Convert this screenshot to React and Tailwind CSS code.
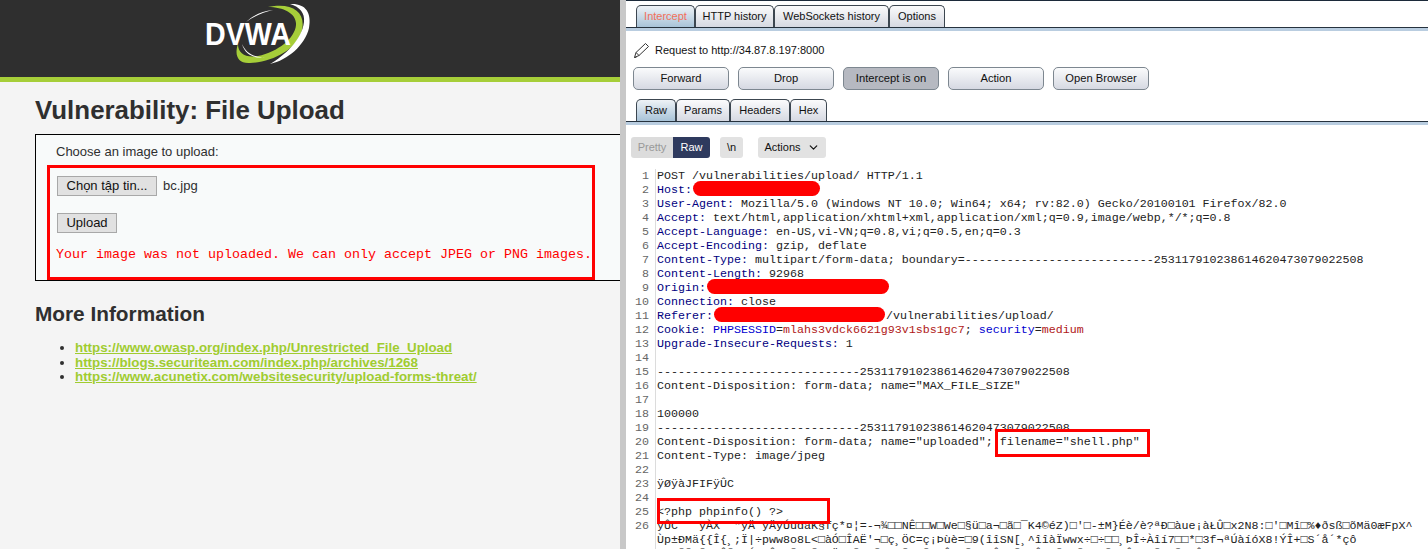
import { ChevronDown } from "lucide-react";

const C = "text-[#000080]";

function Redact({ width }) {
  return <span className="mx-px -my-[2px] inline-block h-[15px] rounded-full bg-[#ff0000] align-[-1px]" style={{ width }} />;
}

function H({ children }) {
  return <span className={C}>{children}</span>;
}

const garbage1 = "ÿÛC   ÿÀX  \"ÿÄ ÿÄÿÚüdàK§fç*¤¦=-¬¾□□NÊ□□W□We□§ü□a¬□ã□¯K4©éZ)□'□-±M}Éè/è?ªÐ□àue¡àŁÛ□x2N8:□'□Mî□%♦ðsß□õMä0æFpX^";
const garbage2 = "Ùp±ÐMä{{Î{¸;Ï|÷pww8o8L<□àÓ□ÎAË'¬□ç¸ÖC=ç¡Þùè=□9(îîSN[¸^îîàÏwwx÷□÷□□¸ÞÎ÷Àîí7□□*□3f¬ªÚàíóX8!ÝÎ+□S´å´*çô";
const garbage3 = "   ÑÃ Ñ  ÂÃ  Ý  Ô  Ñ  Ã  Ö  Ñ  Ñ   Ã  Ñ  Û  Ñ   Ô  Ñ  Ô  Ñ  Ñ   Ã  Ô   Ñ  Ñ  Ô";

const lines = [
  <>POST /vulnerabilities/upload/ HTTP/1.1</>,
  <><H>Host:</H><Redact width={127} /></>,
  <><H>User-Agent:</H> Mozilla/5.0 (Windows NT 10.0; Win64; x64; rv:82.0) Gecko/20100101 Firefox/82.0</>,
  <><H>Accept:</H> text/html,application/xhtml+xml,application/xml;q=0.9,image/webp,*/*;q=0.8</>,
  <><H>Accept-Language:</H> en-US,vi-VN;q=0.8,vi;q=0.5,en;q=0.3</>,
  <><H>Accept-Encoding:</H> gzip, deflate</>,
  <><H>Content-Type:</H> multipart/form-data; boundary=---------------------------253117910238614620473079022508</>,
  <><H>Content-Length:</H> 92968</>,
  <><H>Origin:</H><Redact width={182} /></>,
  <><H>Connection:</H> close</>,
  <><H>Referer:</H><Redact width={171} />/vulnerabilities/upload/</>,
  <><H>Cookie:</H> <span className="text-[#0000d0]">PHPSESSID</span>=<span className="text-[#b01818]">mlahs3vdck6621g93v1sbs1gc7</span>; <span className="text-[#0000d0]">security</span>=<span className="text-[#b01818]">medium</span></>,
  <><H>Upgrade-Insecure-Requests:</H> 1</>,
  <>&nbsp;</>,
  <>-----------------------------253117910238614620473079022508</>,
  <>Content-Disposition: form-data; name="MAX_FILE_SIZE"</>,
  <>&nbsp;</>,
  <>100000</>,
  <>-----------------------------253117910238614620473079022508</>,
  <>Content-Disposition: form-data; name="uploaded"; filename="shell.php"</>,
  <>Content-Type: image/jpeg</>,
  <>&nbsp;</>,
  <>ÿØÿàJFIFÿÛC</>,
  <>&nbsp;</>,
  <>&lt;?php phpinfo() ?&gt;</>,
  <>{garbage1}</>,
];

function Tab({ label, width, active, hot }) {
  return (
    <div
      className={`flex h-full items-center justify-center rounded-t-[5px] border border-b-0 border-[#3c4650] ${width} ${
        active ? "bg-linear-to-b from-[#eef2f6] to-[#a8c3d8]" : "bg-linear-to-b from-[#fbfbfc] to-[#d6d9e2]"
      } ${hot ? "text-[#f2705a]" : "text-[#111]"}`}
    >
      {label}
    </div>
  );
}

function ActionButton({ label, on }) {
  return (
    <button
      type="button"
      className={`h-[23px] w-[96px] rounded-[5px] border border-[#7d8790] text-[#111] ${
        on ? "bg-[#b6b9c1]" : "bg-linear-to-b from-[#fafbfc] to-[#d6d9e2]"
      }`}
    >
      {label}
    </button>
  );
}

function Logo() {
  return (
    <svg width="140" height="76" viewBox="0 0 140 76">
      <path d="M88 7C112 2 126 12 122 30C117 50 92 62 70 63C58 64 54 55 58 44C58 54 66 58 78 56C98 52 115 38 116 25C117 14 104 7 88 7Z" fill="#a6ce39" />
      <path d="M110 4C125 3 132 12 129 28C125 45 108 60 90 64C104 56 122 40 124 22C125 13 120 7 110 4Z" fill="#fff" />
      <path d="M66 22C72 16 82 11 93 10C84 12 74 16 66 22Z" fill="#fff" />
      <path d="M62 44C66 53 74 58 85 57C75 59 65 55 62 44Z" fill="#fff" />
      <text x="25" y="45" fill="#fff" fontFamily="Liberation Sans, sans-serif" fontWeight="700" fontSize="32" textLength="86" lengthAdjust="spacingAndGlyphs">
        DVWA
      </text>
    </svg>
  );
}

export default function App() {
  return (
    <div className="flex h-[549px] w-[1428px] overflow-hidden bg-white font-['Liberation_Sans',sans-serif]">
      <section className="h-full w-[620px] shrink-0 overflow-hidden bg-[#f4f4f4] text-[#2f2f2f]">
        <header className="h-[77px] bg-[#2f2f2f] pl-[180px]">
          <Logo />
        </header>
        <div className="h-[5px] bg-[#a6ce39]" />
        <div className="pl-[35px]">
          <h1 className="mt-[13px] text-[25.9px] leading-[30px] font-bold whitespace-nowrap">Vulnerability: File Upload</h1>
          <div className="relative mt-[9px] h-[147px] w-[620px] border border-black bg-[#f8fafa] pt-[9px] pl-[20px] text-[13px] leading-4">
            <p>Choose an image to upload:</p>
            <div className="mt-[16px] flex items-center gap-[6px] pl-px">
              <button type="button" className="h-[20px] w-[100px] border border-[#a8a8a8] bg-[#e1e1e1] text-[#111]">
                Chọn tập tin...
              </button>
              <span>bc.jpg</span>
            </div>
            <button type="button" className="mt-[17px] ml-px block h-[20px] w-[60px] border border-[#a8a8a8] bg-[#e1e1e1] text-[#111]">
              Upload
            </button>
            <pre className="mt-[14px] font-['Liberation_Mono',monospace] text-[13.33px] leading-4 text-[#ff0000]">
              Your image was not uploaded. We can only accept JPEG or PNG images.
            </pre>
            <div className="absolute top-[30px] left-[11px] h-[115px] w-[548px] border-[3px] border-[#ff0000]" />
          </div>
          <h2 className="mt-[21px] text-[20.8px] leading-6 font-bold">More Information</h2>
          <ul className="mt-[15px] list-disc pl-[40px] text-[13.33px] leading-[14.6px] font-bold">
            <li><a className="text-[#a0cc30] underline" href="#o">https://www.owasp.org/index.php/Unrestricted_File_Upload</a></li>
            <li><a className="text-[#a0cc30] underline" href="#b">https://blogs.securiteam.com/index.php/archives/1268</a></li>
            <li><a className="text-[#a0cc30] underline" href="#a">https://www.acunetix.com/websitesecurity/upload-forms-threat/</a></li>
          </ul>
        </div>
      </section>

      <div className="h-full w-[6px] shrink-0 bg-[#c8c8c8]" />

      <section className="h-full min-w-0 flex-1 overflow-hidden border-t border-[#1c2a3a] text-[11px] text-[#111]">
        <nav className="flex h-[26px] items-stretch pt-[4px] pl-[10px]">
          <Tab label="Intercept" width="w-[59px]" active hot />
          <Tab label="HTTP history" width="w-[79px]" />
          <Tab label="WebSockets history" width="w-[115px]" />
          <Tab label="Options" width="w-[56px]" />
        </nav>
        <div className="h-[4px] border-t border-[#26323e] bg-[#b9cde0]" />

        <div className="flex h-[32px] items-center gap-[5px] pt-[6px] pl-[7px]">
          <svg width="17" height="17" viewBox="0 0 17 17" fill="none" stroke="#333" strokeWidth="1">
            <path d="M1.5 15.5L3 10.5L12.5 1.5L15.5 4.5L6 13.5Z" />
            <path d="M3 10.5L6 13.5" />
            <path d="M1.5 15.5L3.5 15" />
          </svg>
          <span>Request to http://34.87.8.197:8000</span>
        </div>

        <div className="flex gap-[9px] pt-[4px] pl-[7px] text-[11.2px]">
          <ActionButton label="Forward" />
          <ActionButton label="Drop" />
          <ActionButton label="Intercept is on" on />
          <ActionButton label="Action" />
          <ActionButton label="Open Browser" />
        </div>

        <nav className="mt-[9px] flex h-[22px] items-stretch pl-[10px]">
          <Tab label="Raw" width="w-[40px]" active />
          <Tab label="Params" width="w-[54px]" />
          <Tab label="Headers" width="w-[60px]" />
          <Tab label="Hex" width="w-[37px]" />
        </nav>
        <div className="h-[4px] border-t border-[#26323e] bg-[#b9cde0]" />

        <div className="flex items-center pt-[12px] pl-[5px]">
          <div className="flex h-[21px] overflow-hidden rounded-[3px]">
            <span className="flex w-[42px] items-center justify-center bg-[#dcdcdc] text-[#999]">Pretty</span>
            <span className="flex w-[37px] items-center justify-center bg-[#2e3a5e] text-white">Raw</span>
          </div>
          <span className="ml-[10px] flex h-[21px] w-[23px] items-center justify-center rounded-[3px] bg-[#e2e2e2]">\n</span>
          <span className="ml-[15px] flex h-[21px] w-[68px] items-center justify-center gap-[6px] rounded-[3px] bg-[#e2e2e2]">
            Actions
            <ChevronDown size={13} strokeWidth={2.25} />
          </span>
        </div>

        <div className="relative mt-[11px] flex font-['Liberation_Mono',monospace] text-[11.67px] leading-[14px] whitespace-pre">
          <div className="w-[30px] shrink-0 border-r border-[#dcdcdc] pr-[6px] text-right text-[#666]">
            {lines.map((_, i) => (
              <div key={i}>{i + 1}</div>
            ))}
            <div>&nbsp;</div>
            <div>&nbsp;</div>
          </div>
          <div className="min-w-0 flex-1 pl-[1px] text-[#222]">
            {lines.map((line, i) => (
              <div key={i}>{line}</div>
            ))}
            <div>{garbage2}</div>
            <div>{garbage3}</div>
          </div>
          <div className="absolute top-[260px] left-[369px] h-[28px] w-[155px] border-[3px] border-[#ff0000]" />
          <div className="absolute top-[329px] left-[31px] h-[26px] w-[173px] border-[3px] border-[#ff0000]" />
        </div>
      </section>
    </div>
  );
}
